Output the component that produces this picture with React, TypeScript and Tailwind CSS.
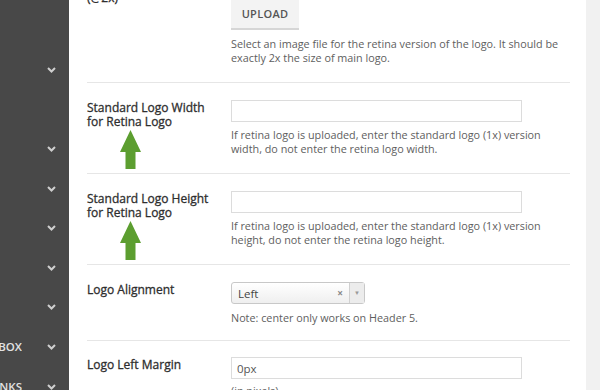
import type { ReactNode } from 'react';

const Chevron = () => (
    <svg width="9" height="6" viewBox="0 0 9 6" className="text-[#cfcfcf]">
        <path d="M1 1l3.5 3.5L8 1" fill="none" stroke="currentColor" strokeWidth="2" />
    </svg>
);

const GreenArrow = () => (
    <svg width="21" height="40" viewBox="0 0 21 40" className="absolute left-[33px] top-full mt-[1px]">
        <path d="M10.5 0L21 22H15.5V39H5.5V22H0Z" fill="#5c9e30" />
    </svg>
);

const sideItems: { text?: string; chevron: boolean }[] = [
    { chevron: true },
    { chevron: false },
    { chevron: true },
    { chevron: true },
    { chevron: true },
    { chevron: true },
    { chevron: true },
    { text: 'LIGHTBOX', chevron: true },
    { text: 'SOCIAL LINKS', chevron: true },
];

function Row({ label, arrow, children, className = '' }: { label: ReactNode; arrow?: boolean; children: ReactNode; className?: string }) {
    return (
        <div className={`flex border-b border-[#e6e6e6] ${className}`}>
            <div className="w-[144px] shrink-0">
                <div className="relative w-fit pt-[1px] text-[12px] leading-[14px] text-[#2e2e2e] [-webkit-text-stroke:0.3px_#2e2e2e]">
                    {label}
                    {arrow && <GreenArrow />}
                </div>
            </div>
            <div className="flex-1">{children}</div>
        </div>
    );
}

const Help = ({ children, className = '' }: { children: ReactNode; className?: string }) => (
    <p className={`text-[10.8px] leading-[14px] text-[#5e5e5e] ${className}`}>{children}</p>
);

const TextInput = ({ value = '' }: { value?: string }) => (
    <div className="flex h-[22px] w-[291px] items-center border border-[#dcdcdc] bg-white px-[5px] text-[11.5px] text-[#555]">
        {value}
    </div>
);

export default function App() {
    return (
        <div className="flex h-[390px] w-[600px] overflow-hidden bg-white font-['Open_Sans',sans-serif]">
            {/* Sidebar */}
            <aside className="flex w-[69px] shrink-0 flex-col bg-[#484848] pt-[50px]">
                {sideItems.map((item, i) => (
                    <div key={i} className="flex h-[39.6px] shrink-0 items-center">
                        <div className="flex w-[22px] justify-end overflow-hidden">
                            {item.text && (
                                <span className="whitespace-nowrap text-[11.5px] font-semibold text-[#e2e2e2]">{item.text}</span>
                            )}
                        </div>
                        <div className="ml-[25px]">{item.chevron && <Chevron />}</div>
                    </div>
                ))}
            </aside>

            {/* Options panel */}
            <main className="flex-1 pl-[18px] pr-[16px]">
                <div className="-mt-[18px]">
                    <Row
                        className="pt-[18px] pb-[17px]"
                        label={
                            <div className="-mt-[24px]">
                                Retina Logo
                                <br />
                                (@2x)
                            </div>
                        }
                    >
                        <button className="h-[30px] w-[68px] border-b-2 border-[#d6d6d6] bg-[#f3f3f3] text-[11px] font-semibold tracking-[0.3px] text-[#555]">
                            UPLOAD
                        </button>
                        <Help className="mt-[7px]">
                            Select an image file for the retina version of the logo. It should be
                            <br />
                            exactly 2x the size of main logo.
                        </Help>
                    </Row>

                    <Row
                        className="pt-[17px] pb-[17px]"
                        arrow
                        label={
                            <>
                                Standard Logo Width
                                <br />
                                for Retina Logo
                            </>
                        }
                    >
                        <TextInput />
                        <Help className="mt-[6px]">
                            If retina logo is uploaded, enter the standard logo (1x) version
                            <br />
                            width, do not enter the retina logo width.
                        </Help>
                    </Row>

                    <Row
                        className="pt-[17px] pb-[17px]"
                        arrow
                        label={
                            <>
                                Standard Logo Height
                                <br />
                                for Retina Logo
                            </>
                        }
                    >
                        <TextInput />
                        <Help className="mt-[6px]">
                            If retina logo is uploaded, enter the standard logo (1x) version
                            <br />
                            height, do not enter the retina logo height.
                        </Help>
                    </Row>

                    <Row className="pt-[17px] pb-[15px]" label="Logo Alignment">
                        <div className="flex h-[22px] w-[134px] items-center rounded-[3px] border border-[#c8c8c8] bg-gradient-to-b from-white to-[#efefef]">
                            <span className="flex-1 pl-[6px] text-[11.5px] text-[#444]">Left</span>
                            <span className="mr-[6px] text-[10px] font-bold leading-none text-[#888]">×</span>
                            <span className="flex h-full w-[15px] items-center justify-center border-l border-[#d0d0d0] bg-[#ececec] text-[6px] text-[#999]">
                                ▼
                            </span>
                        </div>
                        <Help className="mt-[7px]">Note: center only works on Header 5.</Help>
                    </Row>

                    <Row className="pt-[16px] pb-[17px]" label="Logo Left Margin">
                        <TextInput value="0px" />
                        <Help className="mt-[5px]">(in pixels)</Help>
                    </Row>
                </div>
            </main>

            <div className="w-[14px] shrink-0 bg-[#f1f1f1]" />
        </div>
    );
}
